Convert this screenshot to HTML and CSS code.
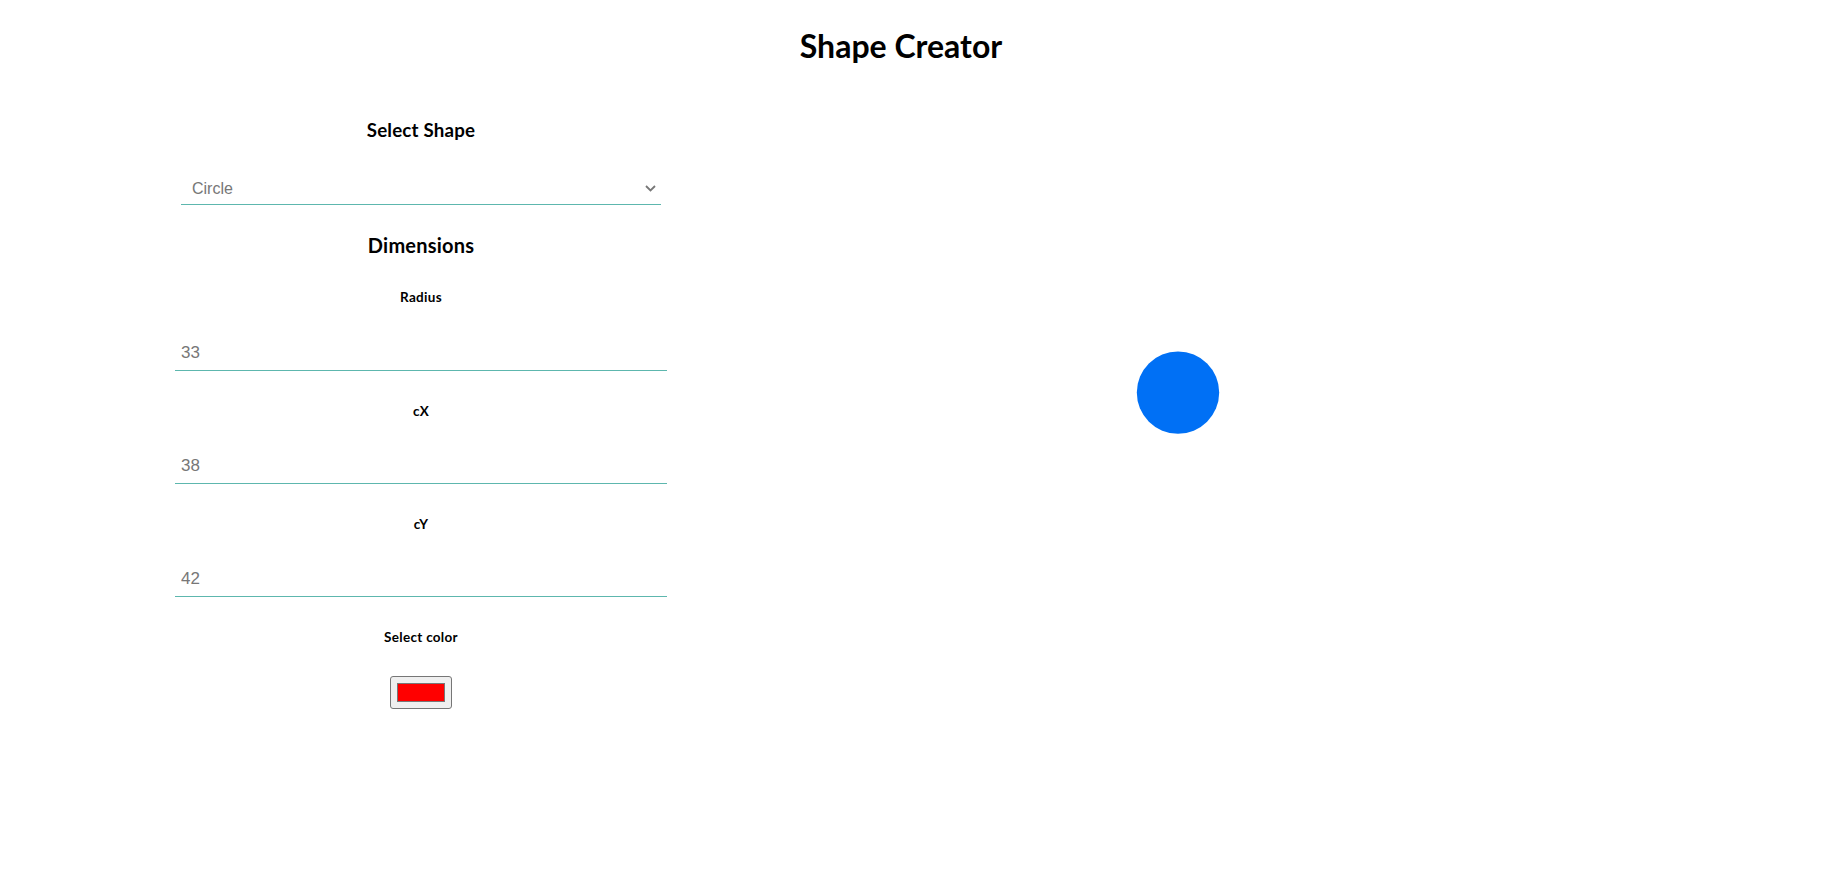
FILE: index.html
```html
<!DOCTYPE html>
<html lang="en">
<head>
<meta charset="utf-8">
<title>Shape Creator</title>
<link rel="stylesheet" href="styles.css">
</head>
<body>
<div class="app">
  <header class="header">
    <h1 class="title">Shape Creator</h1>
  </header>
  <main class="main">
    <section class="controls">
      <h3 class="section-title">Select Shape</h3>
      <div class="select-wrap">
        <select class="shape-select">
          <option>Circle</option>
          <option>Rectangle</option>
        </select>
        <svg class="chevron" width="11" height="7" viewBox="0 0 11 7"><path d="M1 1 L5.5 5.5 L10 1" fill="none" stroke="#777" stroke-width="1.8"/></svg>
      </div>
      <h3 class="section-title dims">Dimensions</h3>
      <div class="field">
        <h5 class="field-label">Radius</h5>
        <input class="field-input" type="text" placeholder="33">
      </div>
      <div class="field">
        <h5 class="field-label">cX</h5>
        <input class="field-input" type="text" placeholder="38">
      </div>
      <div class="field">
        <h5 class="field-label">cY</h5>
        <input class="field-input" type="text" placeholder="42">
      </div>
      <div class="field color-field">
        <h5 class="field-label">Select color</h5>
        <input class="color-input" type="color" value="#ff0000">
      </div>
    </section>
    <section class="canvas">
      <svg class="stage" width="1164" height="700">
        <circle cx="511" cy="273.6" r="41.2" fill="#0070f5"/>
      </svg>
    </section>
  </main>
</div>
</body>
</html>
```
FILE: styles.css
```css
html, body {
  margin: 0;
  padding: 0;
  background: #ffffff;
}

body {
  font-family: Lato, "Noto Sans", sans-serif;
  color: #000;
}

.header {
  padding-top: 27px;
  padding-right: 29px;
  text-align: center;
}

.title {
  margin: 0;
  font-size: 32px;
  line-height: 1.2;
  font-weight: 700;
}

.main {
  display: flex;
  padding-top: 54px;
}

.controls {
  width: 492px;
  margin-left: 175px;
  display: flex;
  flex-direction: column;
  align-items: stretch;
}

.section-title {
  margin: 0;
  font-size: 18.72px;
  line-height: 1.2;
  font-weight: 700;
  text-align: center;
  letter-spacing: 0.2px;
}

.section-title.dims {
  margin-top: 28.5px;
  font-size: 20px;
}

.select-wrap {
  position: relative;
  margin: 27px 6px 0;
}

.shape-select {
  appearance: none;
  -webkit-appearance: none;
  width: 100%;
  height: 36px;
  box-sizing: border-box;
  padding: 4px 30px 0 11px;
  border: none;
  border-bottom: 1px solid #5db7ae;
  border-radius: 0;
  background: transparent;
  font-family: "Liberation Sans", Arial, sans-serif;
  font-size: 16px;
  color: #777;
  outline: none;
}

.chevron {
  position: absolute;
  right: 5px;
  top: 16px;
  pointer-events: none;
}

.field {
  display: flex;
  flex-direction: column;
  margin-top: 32px;
}

.field-label {
  margin: 0;
  font-size: 13.5px;
  line-height: 1.2;
  font-weight: 700;
  text-align: center;
  letter-spacing: 0.3px;
}

.field-input {
  margin-top: 29px;
  height: 36px;
  box-sizing: border-box;
  padding: 1px 6px 0;
  border: none;
  border-bottom: 1px solid #5db7ae;
  border-radius: 0;
  background: transparent;
  font-family: "Liberation Sans", Arial, sans-serif;
  font-size: 17px;
  color: #777;
  outline: none;
}

.field-input::placeholder {
  color: #777;
  opacity: 1;
}

.color-field {
  align-items: center;
}

.color-input {
  margin-top: 31px;
  width: 62px;
  height: 33px;
  box-sizing: border-box;
  padding: 0;
  border: 1px solid #767676;
  border-radius: 3px;
  background: #efefef;
  cursor: pointer;
}

.color-input::-webkit-color-swatch-wrapper {
  padding: 6px;
}

.color-input::-webkit-color-swatch {
  border: 1px solid #777;
  border-radius: 0;
}

.canvas {
  flex: 1;
}

.stage {
  display: block;
}
```
